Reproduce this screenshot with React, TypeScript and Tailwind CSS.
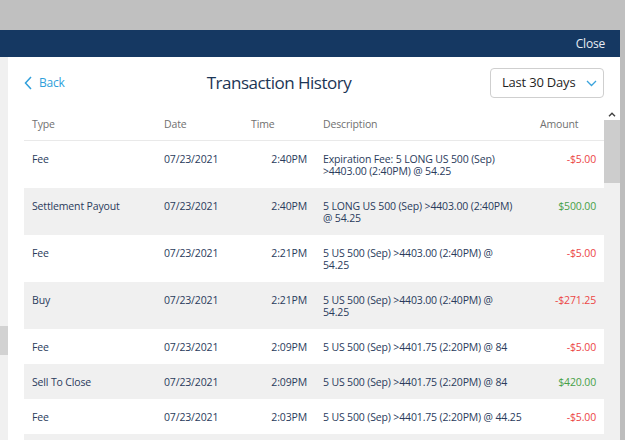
import React from "react";

type Row = {
  type: string;
  time: string;
  desc: string[];
  amount: string;
  credit: boolean;
};

const rows: Row[] = [
  {
    type: "Fee",
    time: "2:40PM",
    desc: ["Expiration Fee: 5 LONG US 500 (Sep)", ">4403.00 (2:40PM) @ 54.25"],
    amount: "-$5.00",
    credit: false,
  },
  {
    type: "Settlement Payout",
    time: "2:40PM",
    desc: ["5 LONG US 500 (Sep) >4403.00 (2:40PM)", "@ 54.25"],
    amount: "$500.00",
    credit: true,
  },
  {
    type: "Fee",
    time: "2:21PM",
    desc: ["5 US 500 (Sep) >4403.00 (2:40PM) @", "54.25"],
    amount: "-$5.00",
    credit: false,
  },
  {
    type: "Buy",
    time: "2:21PM",
    desc: ["5 US 500 (Sep) >4403.00 (2:40PM) @", "54.25"],
    amount: "-$271.25",
    credit: false,
  },
  {
    type: "Fee",
    time: "2:09PM",
    desc: ["5 US 500 (Sep) >4401.75 (2:20PM) @ 84"],
    amount: "-$5.00",
    credit: false,
  },
  {
    type: "Sell To Close",
    time: "2:09PM",
    desc: ["5 US 500 (Sep) >4401.75 (2:20PM) @ 84"],
    amount: "$420.00",
    credit: true,
  },
  {
    type: "Fee",
    time: "2:03PM",
    desc: ["5 US 500 (Sep) >4401.75 (2:20PM) @ 44.25"],
    amount: "-$5.00",
    credit: false,
  },
  {
    type: "Buy",
    time: "2:03PM",
    desc: ["5 US 500 (Sep) >4401.75 (2:20PM) @ 44.25"],
    amount: "-$220.00",
    credit: false,
  },
];

const cols = "grid grid-cols-[132px_87px_72px_217px_72px]";

export default function App() {
  return (
    <div
      className="w-[625px] h-[440px] overflow-hidden bg-[#c0c0c0] flex flex-col"
      style={{ fontFamily: "'Open Sans', 'Noto Sans', sans-serif" }}
    >
      <div className="h-[30px] shrink-0" />
      <div className="flex flex-1 min-h-0">
        <div className="w-[620px] flex flex-col">
          {/* modal header bar */}
          <div className="h-[27px] shrink-0 bg-[#153862] flex items-center justify-end pr-[15px]">
            <span className="text-[12px] text-[#e6ecf3] tracking-[-0.2px]">Close</span>
          </div>

          <div className="flex flex-1 min-h-0">
            {/* page scrollbar behind the modal */}
            <div className="w-[8px] bg-[#f0f0f0] flex flex-col">
              <div className="h-[269px]" />
              <div className="h-[29px] bg-[#d2d2d2]" />
            </div>

            <div className="flex-1 bg-white flex flex-col min-h-0">
              {/* title row */}
              <div className="h-[51px] shrink-0 flex items-start pt-[11px] pl-[16px] pr-[16px]">
                <div className="flex items-center h-[30px] w-[120px] gap-[7px] text-[#2f9fdb]">
                  <svg width="8" height="14" viewBox="0 0 8 14" fill="none">
                    <path d="M7 1 L1.5 7 L7 13" stroke="#2f9fdb" strokeWidth="1.5" />
                  </svg>
                  <span className="text-[12px] tracking-[-0.2px]">Back</span>
                </div>
                <div className="flex-1 flex justify-center h-[30px] items-center">
                  <span className="text-[17px] text-[#1b3556] tracking-[-0.5px] mr-[76px]">
                    Transaction History
                  </span>
                </div>
                <div className="w-[114px] h-[30px] border border-[#cfcfcf] rounded-[4px] flex items-center justify-between pl-[11px] pr-[6px]">
                  <span className="text-[13px] text-[#1f1f1f] tracking-[-0.2px]">Last 30 Days</span>
                  <svg width="11" height="7" viewBox="0 0 11 7" fill="none">
                    <path d="M1 1 L5.5 5.5 L10 1" stroke="#3aa3dc" strokeWidth="1.3" />
                  </svg>
                </div>
              </div>

              {/* scroll region */}
              <div className="flex flex-1 min-h-0">
                <div className="flex-1 ml-[16px] overflow-hidden text-[10.5px] tracking-[-0.15px]">
                  <div className={`${cols} h-[33px] items-center border-b border-[#e9e9e9] text-[#707070]`}>
                    <div className="pl-[8px] pt-[1px]">Type</div>
                    <div className="pl-[8px] pt-[1px]">Date</div>
                    <div className="pl-[8px] pt-[1px]">Time</div>
                    <div className="pl-[8px] pt-[1px]">Description</div>
                    <div className="pl-[8px] pt-[1px]">Amount</div>
                  </div>
                  {rows.map((r, i) => (
                    <div
                      key={i}
                      className={`${cols} pt-[12px] pb-[11px] leading-[12px] text-[#2a3b5c] ${
                        i % 2 === 1 ? "bg-[#f0f0f0]" : "bg-white"
                      }`}
                    >
                      <div className="pl-[8px] whitespace-nowrap">{r.type}</div>
                      <div className="pl-[8px]">07/23/2021</div>
                      <div className="pr-[8px] text-right">{r.time}</div>
                      <div className="pl-[8px] whitespace-nowrap">
                        {r.desc.map((d, j) => (
                          <div key={j}>{d}</div>
                        ))}
                      </div>
                      <div
                        className={`pr-[8px] text-right ${
                          r.credit ? "text-[#47a047]" : "text-[#ec4646]"
                        }`}
                      >
                        {r.amount}
                      </div>
                    </div>
                  ))}
                </div>

                {/* table scrollbar */}
                <div className="w-[16px] flex flex-col bg-[#f0f0f0]">
                  <div className="h-[12px] bg-white flex items-center justify-center">
                    <svg width="8" height="5" viewBox="0 0 8 5" fill="none">
                      <path d="M1 4.3 L4 1.3 L7 4.3" stroke="#404040" strokeWidth="1.4" />
                    </svg>
                  </div>
                  <div className="h-[63px] bg-[#cdcdcd]" />
                </div>
              </div>
            </div>
          </div>
        </div>
        <div className="flex-1 bg-[#bdbdbd]" />
      </div>
    </div>
  );
}
